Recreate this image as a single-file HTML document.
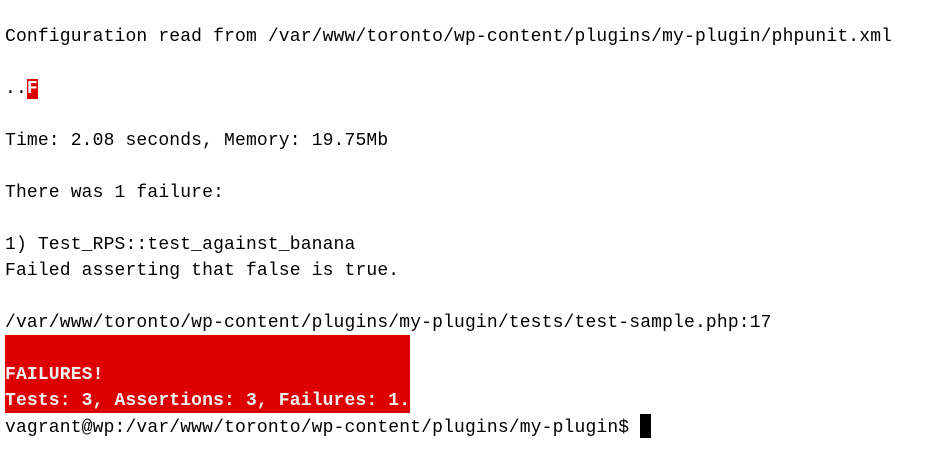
<!DOCTYPE html>
<html><head><meta charset="utf-8"><style>
html,body{margin:0;padding:0;background:#fff;width:943px;height:463px;overflow:hidden}
.t{position:absolute;left:5px;top:24px;font-family:"Liberation Mono",monospace;font-size:18px;letter-spacing:0.15px;line-height:26px;color:#000;white-space:pre}
.r{position:absolute;left:5px;top:335px;width:405px;height:78px;background:#de0000}
.f{background:#de0000;color:#fff;font-weight:bold}
.w{color:#f0f0f0;font-weight:bold}
.c{display:inline-block;width:11px;height:24px;background:#000;vertical-align:-6px}
</style></head><body>
<div class="r"></div>
<div class="t">Configuration read from /var/www/toronto/wp-content/plugins/my-plugin/phpunit.xml

..<span class="f">F</span>

Time: 2.08 seconds, Memory: 19.75Mb

There was 1 failure:

1) Test_RPS::test_against_banana
Failed asserting that false is true.

/var/www/toronto/wp-content/plugins/my-plugin/tests/test-sample.php:17

<span class="w">FAILURES!</span>
<span class="w">Tests: 3, Assertions: 3, Failures: 1.</span>
vagrant@wp:/var/www/toronto/wp-content/plugins/my-plugin$ <span class="c"></span></div>
</body></html>
